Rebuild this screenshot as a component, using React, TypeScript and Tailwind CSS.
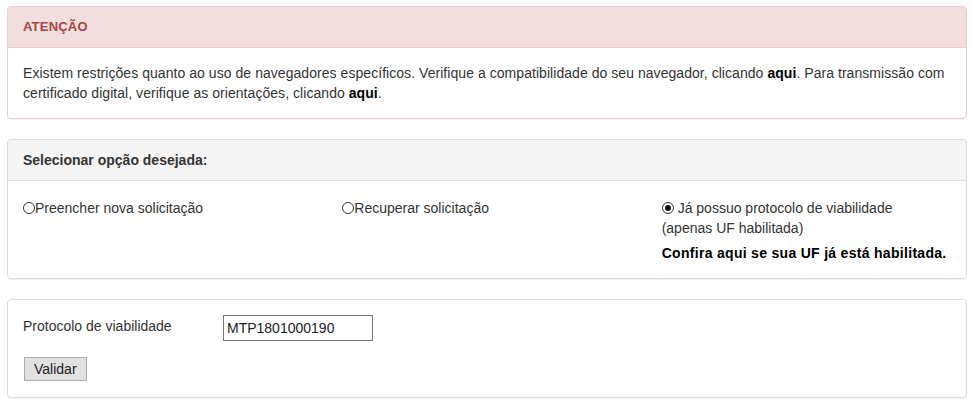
import React from 'react';

function Radio({ checked }: { checked?: boolean }) {
  return (
    <span className="inline-flex w-[12px] h-[12px] rounded-full border border-[#333] bg-white items-center justify-center shrink-0">
      {checked && <span className="w-[6px] h-[6px] rounded-full bg-[#111]" />}
    </span>
  );
}

export default function App() {
  return (
    <div className="min-h-screen bg-white pl-[7px] pr-[4px] pt-[6px] text-[14px] leading-[20px] text-[#333] font-['Liberation_Sans',Arial,sans-serif]">
      {/* Atenção */}
      <div className="border border-[#ebccd1] rounded-[4px] shadow-[0_1px_1px_rgba(0,0,0,0.05)] mb-[20px]">
        <div className="bg-[#f2dede] border-b border-[#ebccd1] rounded-t-[3px] px-[15px] py-[10px] text-[13px] font-bold tracking-[0.2px] text-[#a94442]">
          ATENÇÃO
        </div>
        <div className="px-[15px] py-[15px] tracking-[0.05px]">
          Existem restrições quanto ao uso de navegadores específicos. Verifique a compatibilidade do seu navegador, clicando{' '}
          <b className="text-black">aqui</b>. Para transmissão com certificado digital, verifique as orientações, clicando{' '}
          <b className="text-black">aqui</b>.
        </div>
      </div>

      {/* Seleção */}
      <div className="border border-[#ddd] rounded-[4px] shadow-[0_1px_1px_rgba(0,0,0,0.05)] mb-[20px]">
        <div className="bg-[#f5f5f5] border-b border-[#ddd] rounded-t-[3px] px-[15px] py-[10px] font-bold">
          Selecionar opção desejada:
        </div>
        <div className="px-[15px] pt-[17px] pb-[15px]">
          <div className="grid grid-cols-3 -mx-[15px]">
            <div className="flex items-start px-[15px]">
              <span className="flex items-center h-[20px]"><Radio /></span>
              <span>Preencher nova solicitação</span>
            </div>
            <div className="flex items-start px-[15px]">
              <span className="flex items-center h-[20px]"><Radio /></span>
              <span>Recuperar solicitação</span>
            </div>
            <div className="px-[15px]">
              <div className="flex items-start gap-[4px]">
                <span className="flex items-center h-[20px]"><Radio checked /></span>
                <span>Já possuo protocolo de viabilidade</span>
              </div>
              <div>(apenas UF habilitada)</div>
              <div className="mt-[5px] font-bold text-black tracking-[0.3px] whitespace-nowrap">Confira aqui se sua UF já está habilitada.</div>
            </div>
          </div>
        </div>
      </div>

      {/* Protocolo */}
      <div className="border border-[#ddd] rounded-[4px] shadow-[0_1px_1px_rgba(0,0,0,0.05)]">
        <div className="px-[15px] pt-[15px] pb-[16px]">
          <div className="flex items-start">
            <label className="w-[200px] pt-[1px]">Protocolo de viabilidade</label>
            <input
              readOnly
              value="MTP1801000190"
              className="w-[150px] h-[26px] border border-[#767676] px-[3px] text-[14px] text-[#222] outline-none"
            />
          </div>
          <button className="mt-[16px] ml-[1px] h-[24px] px-[9px] bg-[#e1e1e1] border border-[#adadad] text-[14px] text-[#222]">
            Validar
          </button>
        </div>
      </div>
    </div>
  );
}
